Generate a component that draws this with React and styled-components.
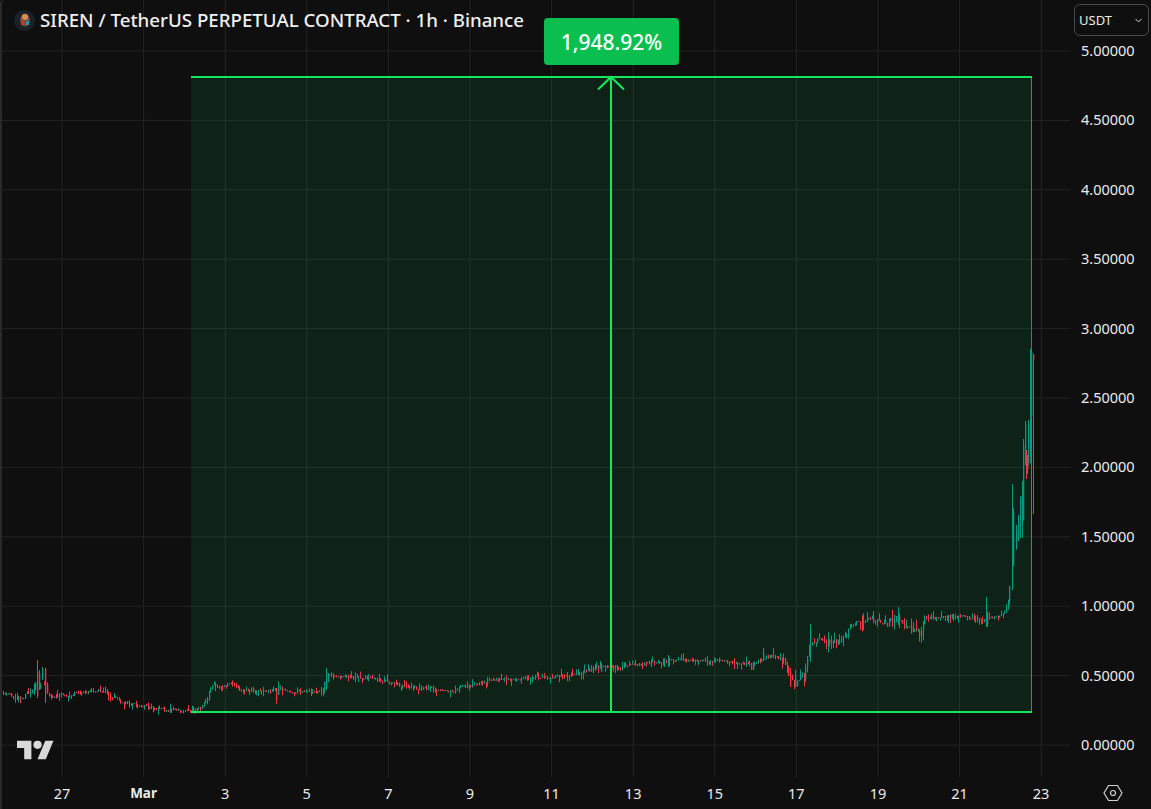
import React from 'react'
import styled, { createGlobalStyle } from 'styled-components'
import { ChevronDown } from 'lucide-react'

const GlobalStyle = createGlobalStyle`
  html, body {
    margin: 0;
    background: #0f0f0f;
  }
`

const FONT = `"Noto Sans", "Open Sans", sans-serif`
const GREEN = '#14e85c'
const UP = '#089981'
const DOWN = '#f23645'
const GRID = '#232323'

const PRICES = ['5.00000', '4.50000', '4.00000', '3.50000', '3.00000', '2.50000', '2.00000', '1.50000', '1.00000', '0.50000', '0.00000']
const DATES = ['27', 'Mar', '3', '5', '7', '9', '11', '13', '15', '17', '19', '21', '23']
const PRICE_STEP = 69.4
const DATE_STEP = 81.6

// rough trace of the closes, [x, y] in page pixels
const TRACE = [
  [3, 693], [10, 693], [16, 699], [24, 696], [32, 690], [37, 680], [43, 683], [49, 697], [60, 695], [72, 694],
  [85, 692], [100, 691], [110, 696], [125, 703], [150, 708], [167, 710], [190, 711], [200, 708], [207, 698],
  [212, 684], [220, 687], [230, 683], [240, 690], [270, 690], [280, 688], [290, 692], [300, 691], [315, 693],
  [323, 689], [326, 672], [332, 676], [340, 677], [380, 680], [396, 685], [410, 688], [430, 688], [450, 692],
  [460, 688], [480, 683], [500, 678], [510, 680], [520, 678], [540, 677], [560, 676], [580, 673], [600, 666],
  [610, 667], [640, 664], [660, 662], [670, 660], [700, 661], [730, 662], [750, 664], [760, 660], [770, 656],
  [783, 658], [786, 666], [790, 680], [795, 685], [800, 674], [804, 678], [808, 650], [812, 640], [825, 641],
  [840, 643], [850, 626], [870, 620], [880, 621], [888, 622], [897, 618], [905, 628], [920, 634], [925, 617],
  [935, 618], [945, 617], [955, 616], [970, 618], [985, 618], [1002, 616], [1005, 612], [1008, 602], [1010, 582],
]

// the wicks that stand out, [x, high, low, open, close]
const SPECIAL = [
  [35, 682, 691, 690, 683], [37, 660, 698, 672, 696], [39, 670, 690, 688, 673], [42, 667, 680, 678, 668],
  [45, 668, 703, 668, 695], [276, 688, 704, 688, 700], [278, 681, 695, 695, 685],
  [326, 668, 690, 688, 672], [601, 663, 672, 672, 665], [668, 655, 667, 667, 658], [751, 663, 670, 663, 670],
  [753, 662, 670, 670, 664], [763, 648, 661, 661, 652], [810, 624, 662, 640, 630], [898, 607, 625, 622, 612],
  [986, 597, 627, 620, 604], [987, 612, 627, 612, 624], [790, 668, 687, 672, 686], [795, 670, 687, 687, 676],
  [1012, 484, 590, 587, 510], [1013, 508, 566, 566, 512], [1016, 525, 550, 548, 530], [1018, 515, 541, 540, 520],
  [1020, 496, 538, 526, 498], [1022, 481, 538, 522, 486], [1023, 439, 520, 520, 445], [1025, 421, 465, 452, 424],
  [1026, 450, 479, 450, 470], [1027, 455, 474, 456, 470], [1028, 420, 466, 464, 424], [1030, 349, 463, 414, 350],
  [1031, 320, 420, 416, 352], [1033, 354, 514, 354, 360],
]

const traceAt = x => {
  for (let i = 1; i < TRACE.length; i++) {
    if (x <= TRACE[i][0]) {
      const [x0, y0] = TRACE[i - 1]
      const [x1, y1] = TRACE[i]
      return y0 + ((y1 - y0) * (x - x0)) / (x1 - x0)
    }
  }
  return TRACE[TRACE.length - 1][1]
}

const noiseAt = x => {
  if (x > 925) return 1.8
  if (x > 810) return 3.4
  if (x > 760) return 3
  return 1.9
}

const buildCandles = () => {
  let seed = 20240322
  const rand = () => {
    seed = (seed * 1664525 + 1013904223) % 4294967296
    return seed / 4294967296
  }
  const taken = SPECIAL.map(s => s[0])
  const candles = []
  let prev = TRACE[0][1]
  for (let x = 3; x < 1011; x += 1.7) {
    if (taken.some(t => Math.abs(t - x) < 0.9)) continue
    const amp = noiseAt(x)
    const close = traceAt(x) + (rand() - 0.5) * amp * 2
    candles.push({
      x,
      open: prev,
      close,
      high: Math.min(prev, close) - rand() ** 3 * amp * 3,
      low: Math.max(prev, close) + rand() ** 3 * amp * 3,
    })
    prev = close
  }
  SPECIAL.forEach(([x, high, low, open, close]) => candles.push({ x, high, low, open, close }))
  return candles
}

const toPaths = candles => {
  const paths = { up: { wicks: '', bodies: '' }, down: { wicks: '', bodies: '' } }
  candles.forEach(({ x, open, close, high, low }) => {
    const side = close <= open ? paths.up : paths.down
    const left = Math.round(x)
    const top = Math.min(open, close).toFixed(1)
    const height = Math.max(Math.abs(open - close), 1).toFixed(1)
    side.wicks += `M${left + 0.5} ${high.toFixed(1)}V${low.toFixed(1)}`
    side.bodies += `M${left} ${top}h1.3v${height}h-1.3z`
  })
  return paths
}

const candlePaths = toPaths(buildCandles())

const Screen = styled.div`
  display: grid;
  grid-template-columns: 1068px 81px;
  grid-template-rows: 777px 32px;
  width: 1151px;
  height: 809px;
  overflow: hidden;
  box-sizing: border-box;
  border-left: 2px solid #2a2a2a;
  border-top-left-radius: 4px;
  background: #0f0f0f;
  color: #ececec;
  font-family: ${FONT};
`

const Plot = styled.div`
  position: relative;
`

const ChartSvg = styled.svg`
  display: block;
`

const Legend = styled.div`
  position: absolute;
  top: 8px;
  left: 12px;
  display: flex;
  align-items: center;
  gap: 5px;
  font-size: 18.7px;
  line-height: 24px;
  font-weight: 500;
  color: #f0f0f0;
  white-space: nowrap;
`

const CoinLogo = styled.span`
  display: flex;
  align-items: center;
  justify-content: center;
  width: 21px;
  height: 21px;
  border-radius: 50%;
  background: #1a2028;
`

const ChangeBadge = styled.div`
  position: absolute;
  top: 18px;
  left: 542px;
  width: 135px;
  height: 47px;
  display: flex;
  align-items: center;
  justify-content: center;
  border-radius: 4px;
  background: #0abf4f;
  color: #fff;
  font-size: 21px;
  font-weight: 500;
`

const Watermark = styled.svg`
  position: absolute;
  left: 15px;
  top: 740px;
  fill: #d9d9d9;
`

const PriceAxis = styled.div`
  position: relative;
  display: flex;
  flex-direction: column;
  padding-top: 15.3px;
  font-size: 14.5px;
`

const PriceLabel = styled.div`
  height: ${PRICE_STEP}px;
  flex: none;
  display: flex;
  align-items: center;
  padding-left: 11px;
`

const CurrencyButton = styled.button`
  position: absolute;
  top: 4px;
  right: 2px;
  width: 75px;
  height: 32px;
  box-sizing: border-box;
  display: flex;
  align-items: center;
  justify-content: space-between;
  padding: 0 4px;
  border: 1px solid #4a4a4a;
  border-radius: 6px;
  background: #0f0f0f;
  color: #ececec;
  font-family: ${FONT};
  font-size: 13px;
`

const TimeAxis = styled.div`
  display: grid;
  grid-template-columns: repeat(${DATES.length}, ${DATE_STEP}px);
  padding-left: 19.2px;
  align-items: center;
  font-size: 14.5px;
`

const DateLabel = styled.div`
  text-align: center;
  font-size: ${p => (p.$month ? '13.5px' : 'inherit')};
  font-weight: ${p => (p.$month ? 700 : 400)};
`

const AxisCorner = styled.div`
  display: flex;
  align-items: center;
  justify-content: center;
  padding-left: 5px;
`

const PriceChart = () => {
  const hLines = PRICES.map((_, i) => 51 + i * PRICE_STEP)
  const vLines = DATES.map((_, i) => 62 + i * DATE_STEP)
  return (
    <ChartSvg width="1068" height="777" viewBox="2 0 1068 777">
      {hLines.map(y => (
        <line key={y} x1="2" x2="1070" y1={y} y2={y} stroke={GRID} />
      ))}
      {vLines.map(x => (
        <line key={x} x1={x} x2={x} y1="0" y2="777" stroke={GRID} />
      ))}
      <rect x="191" y="77" width="840.5" height="634.5" fill="#14e870" fillOpacity="0.09" />
      <line x1="1031.5" x2="1031.5" y1="77" y2="712" stroke="#1f9e6b" />
      <path d={candlePaths.up.wicks} stroke={UP} fill="none" />
      <path d={candlePaths.up.bodies} fill={UP} />
      <path d={candlePaths.down.wicks} stroke={DOWN} fill="none" />
      <path d={candlePaths.down.bodies} fill={DOWN} />
      <g stroke={GREEN} strokeWidth="2" fill="none">
        <line x1="191" x2="1032" y1="77" y2="77" />
        <line x1="191" x2="1032" y1="712" y2="712" />
        <line x1="611" x2="611" y1="77" y2="712" />
        <path d="M598 89.5 L611 77 L624 89.5" />
      </g>
    </ChartSvg>
  )
}

const App = () => (
  <Screen>
    <GlobalStyle />
    <Plot>
      <PriceChart />
      <Legend>
        <CoinLogo>
          <svg width="12" height="14" viewBox="0 0 12 14">
            <ellipse cx="6" cy="7" rx="5" ry="6.5" fill="#7a4a3a" />
            <circle cx="6" cy="4" r="3" fill="#d8914f" />
            <rect x="2" y="8" width="3" height="4" fill="#c9342f" />
            <rect x="7" y="8" width="3" height="4" fill="#2f8fb0" />
          </svg>
        </CoinLogo>
        SIREN / TetherUS PERPETUAL CONTRACT · 1h · Binance
      </Legend>
      <ChangeBadge>1,948.92%</ChangeBadge>
      <Watermark width="37" height="20" viewBox="0 4 36 18">
        <path d="M14 22H7V11H0V4h14v18zM28 22h-8l7.5-18h8L28 22z" />
        <circle cx="20" cy="8" r="4" />
      </Watermark>
    </Plot>
    <PriceAxis>
      <CurrencyButton>
        USDT
        <ChevronDown size={11} strokeWidth={2} />
      </CurrencyButton>
      {PRICES.map(p => (
        <PriceLabel key={p}>{p}</PriceLabel>
      ))}
    </PriceAxis>
    <TimeAxis>
      {DATES.map(d => (
        <DateLabel key={d} $month={d === 'Mar'}>
          {d}
        </DateLabel>
      ))}
    </TimeAxis>
    <AxisCorner>
      <svg width="20" height="18" viewBox="0 0 20 18" fill="none" stroke="#d0d0d0" strokeWidth="1.2">
        <path d="M5.5 1.5h9L19 9l-4.5 7.5h-9L1 9z" />
        <circle cx="10" cy="9" r="2.5" />
      </svg>
    </AxisCorner>
  </Screen>
)

export default App
